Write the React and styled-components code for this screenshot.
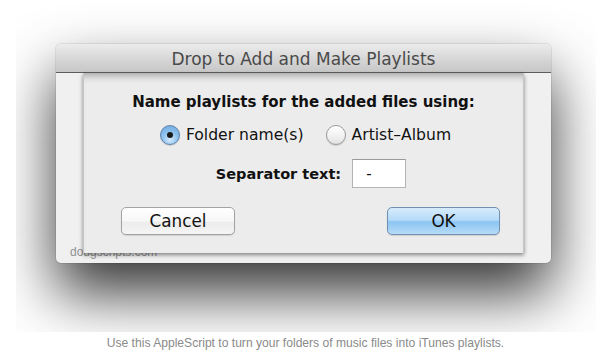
import React from "react";
import styled, { createGlobalStyle } from "styled-components";

const GlobalStyle = createGlobalStyle`
  html, body { margin: 0; padding: 0; background: #ffffff; }
  body { width: 611px; height: 361px; overflow: hidden; }
`;

const Page = styled.div`
  width: 611px;
  height: 361px;
  display: flex;
  flex-direction: column;
`;

const Stage = styled.div`
  margin: 0 15px 0 16px;
  height: 332px;
  overflow: hidden;
  background: #ffffff;
  padding: 44px 0 0 40px;
  box-sizing: border-box;
`;

const Window = styled.div`
  width: 495px;
  height: 219px;
  border-radius: 5px;
  background: #f0f0f0;
  box-shadow: 0 30px 60px rgba(0, 0, 0, 0.8), 0 0 0 1px rgba(0, 0, 0, 0.08);
  display: flex;
  flex-direction: column;
  overflow: hidden;
`;

const TitleBar = styled.div`
  height: 29px;
  border-bottom: 1px solid #5c5c5c;
  background: linear-gradient(#ececec, #d6d6d6 55%, #c7c7c7);
  display: flex;
  align-items: center;
  justify-content: center;
  font-family: "DejaVu Sans", sans-serif;
  font-size: 17px;
  color: #4a4a4a;
  padding-top: 2px;
  box-sizing: border-box;
`;

const Body = styled.div`
  flex: 1;
  display: flex;
  flex-direction: column;
`;

const Sheet = styled.div`
  position: relative;
  z-index: 1;
  margin: 0 27px;
  height: 180px;
  background: #ececec;
  border-left: 1px solid #c6c6c6;
  border-right: 1px solid #c6c6c6;
  box-sizing: border-box;
  box-shadow: inset 0 9px 8px -7px rgba(0, 0, 0, 0.35), 0 2px 4px rgba(0, 0, 0, 0.45);
  display: flex;
  flex-direction: column;
  align-items: center;
  font-family: "DejaVu Sans", sans-serif;
  color: #111;
`;

const Heading = styled.div`
  margin-top: 19px;
  height: 20px;
  line-height: 20px;
  font-weight: bold;
  font-size: 15px;
`;

const RadioRow = styled.div`
  margin-top: 13px;
  height: 20px;
  display: flex;
  align-items: center;
  gap: 22px;
  margin-left: 4px;
`;

const RadioOption = styled.label`
  display: flex;
  align-items: center;
  gap: 6px;
  font-size: 15.6px;
`;

const RadioCircle = styled.span`
  width: 20px;
  height: 20px;
  border-radius: 50%;
  box-sizing: border-box;
  display: flex;
  align-items: center;
  justify-content: center;
  border: 1px solid ${(p) => (p.$on ? "#5e82ab" : "#9b9b9b")};
  background: ${(p) =>
    p.$on
      ? "radial-gradient(circle at 50% 75%, #d4ecff 0%, #8fc2ee 45%, #6aa6dc 100%)"
      : "linear-gradient(#ffffff, #f3f3f3 50%, #e2e2e2)"};
  box-shadow: 0 1px 1px rgba(0, 0, 0, 0.15);
`;

const Dot = styled.span`
  width: 6px;
  height: 6px;
  border-radius: 50%;
  background: #1a1a1a;
`;

const SepRow = styled.div`
  margin-top: 14px;
  margin-left: 15px;
  display: flex;
  align-items: center;
  gap: 11px;
`;

const SepLabel = styled.span`
  font-weight: bold;
  font-size: 14.5px;
`;

const Field = styled.div`
  width: 54px;
  height: 29px;
  box-sizing: border-box;
  background: #fff;
  border: 1px solid #b4b4b4;
  border-top-color: #9a9a9a;
  padding-left: 13px;
  display: flex;
  align-items: center;
  font-size: 15px;
`;

const ButtonRow = styled.div`
  align-self: stretch;
  margin-top: 19px;
  padding: 0 23px 0 37px;
  display: flex;
  justify-content: space-between;
`;

const Button = styled.div`
  width: ${(p) => p.$w}px;
  height: 28px;
  box-sizing: border-box;
  border-radius: 5px;
  display: flex;
  align-items: center;
  justify-content: center;
  font-size: 16.8px;
  color: #111;
  border: 1px solid ${(p) => (p.$primary ? "#6f8fb3" : "#a3a3a3")};
  background: ${(p) =>
    p.$primary
      ? "linear-gradient(#d7ecfc, #b6dbf8 45%, #8cc5f2 55%, #b7dcf8)"
      : "linear-gradient(#ffffff, #f7f7f7 50%, #ececec 55%, #f5f5f5)"};
  box-shadow: 0 1px 1px rgba(0, 0, 0, 0.12);
`;

const Footer = styled.div`
  margin-top: -8px;
  padding-left: 14px;
  font-family: "Liberation Sans", sans-serif;
  font-size: 12px;
  color: #8f8f8f;
  line-height: 14px;
`;

const Caption = styled.div`
  margin-top: 4px;
  text-align: center;
  font-family: "Liberation Sans", sans-serif;
  font-size: 12.1px;
  color: #8a8a8a;
`;

export default function App() {
  return (
    <Page>
      <GlobalStyle />
      <Stage>
        <Window>
          <TitleBar>Drop to Add and Make Playlists</TitleBar>
          <Body>
            <Sheet>
              <Heading>Name playlists for the added files using:</Heading>
              <RadioRow>
                <RadioOption>
                  <RadioCircle $on>
                    <Dot />
                  </RadioCircle>
                  Folder name(s)
                </RadioOption>
                <RadioOption>
                  <RadioCircle />
                  Artist–Album
                </RadioOption>
              </RadioRow>
              <SepRow>
                <SepLabel>Separator text:</SepLabel>
                <Field>-</Field>
              </SepRow>
              <ButtonRow>
                <Button $w={114}>Cancel</Button>
                <Button $w={113} $primary>
                  OK
                </Button>
              </ButtonRow>
            </Sheet>
            <Footer>dougscripts.com</Footer>
          </Body>
        </Window>
      </Stage>
      <Caption>
        Use this AppleScript to turn your folders of music files into iTunes playlists.
      </Caption>
    </Page>
  );
}
